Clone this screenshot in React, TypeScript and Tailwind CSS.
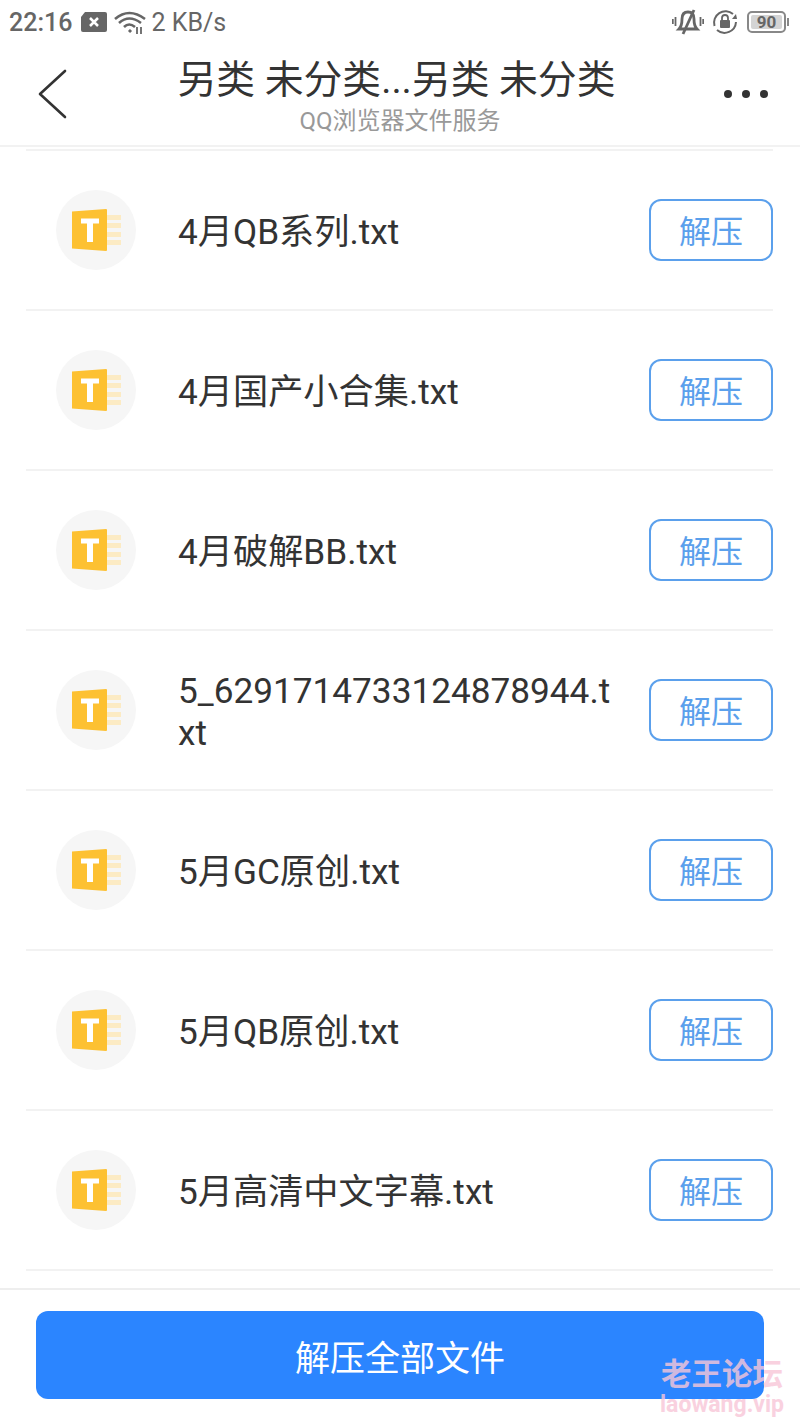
const font = { fontFamily: '"Roboto", "Noto Sans CJK SC", sans-serif' };

const files = [
  "4月QB系列.txt",
  "4月国产小合集.txt",
  "4月破解BB.txt",
  "5_6291714733124878944.txt",
  "5月GC原创.txt",
  "5月QB原创.txt",
  "5月高清中文字幕.txt",
];

function TxtIcon() {
  return (
    <div className="flex h-20 w-20 shrink-0 items-center justify-center rounded-full bg-[#f6f6f6]">
      <svg width="52" height="44" viewBox="0 0 52 44" className="ml-[1px]">
        <rect x="36" y="7" width="14" height="5" fill="#fcebc4" />
        <rect x="36" y="15" width="14" height="5" fill="#fcebc4" />
        <rect x="36" y="24" width="14" height="5" fill="#fcebc4" />
        <rect x="36" y="32" width="14" height="5" fill="#fcebc4" />
        <path d="M1 3.5 L35 1 Q36 1 36 2 V42 Q36 43 35 43 L1 40.5 Z" fill="#fdc132" />
        <path d="M10 10.5 H28 V15.5 H22 V34 H16 V15.5 H10 Z" fill="#ffffff" />
      </svg>
    </div>
  );
}

function Row({ name }: { name: string }) {
  return (
    <div className="flex h-40 items-center border-t-2 border-[#f2f2f2] pl-[30px]">
      <TxtIcon />
      <div className="ml-[42px] w-[440px] pt-[4px] text-[35.2px] leading-[42px] break-all text-[#333333]">{name}</div>
      <button className="ml-auto flex h-[62px] w-[124px] items-center justify-center rounded-[12px] border-2 border-[#5ba0ec] pt-[4px] text-[32px] text-[#5ba0ec]">
        解压
      </button>
    </div>
  );
}

function StatusBar() {
  return (
    <div className="flex h-[44px] items-center justify-between pl-[9px] pr-[14px] text-[#666666]">
      <div className="flex items-center">
        <span className="text-[25px] font-medium leading-none">22:16</span>
        <svg width="28" height="20" viewBox="0 0 28 20" className="ml-[8px]">
          <path d="M5 0 H25 Q27 0 27 2 V18 Q27 20 25 20 H3 Q1 20 1 18 V5 Z" fill="#666666" />
          <path d="M10 6 L18 14 M18 6 L10 14" stroke="#ffffff" strokeWidth="2.5" />
        </svg>
        <svg width="32" height="24" viewBox="0 0 32 24" className="ml-[6px]" fill="none" stroke="#666666" strokeWidth="2.6">
          <path d="M1 9 Q15 -3 31 9" />
          <path d="M5 13 Q15 4 27 13" />
          <path d="M10 17 Q15 12 21 17" />
          <path d="M15 22 L17 20" strokeWidth="3" />
          <path d="M23 17 V24 M27 17 V24" strokeWidth="1.8" />
        </svg>
        <span className="ml-[5px] text-[25px] leading-none">2 KB/s</span>
      </div>
      <div className="flex items-center">
        <svg width="32" height="26" viewBox="0 0 32 26" fill="none" stroke="#666666" strokeWidth="2.8">
          <path d="M7 20 Q10 17 10 10 Q10 3 16 3 Q22 3 22 10 Q22 17 25 20 Z" />
          <path d="M22 1 L11 25" />
          <path d="M3.5 8 V17 M0.8 10 V15 M28.5 8 V17 M31.2 10 V15" strokeWidth="1.8" />
        </svg>
        <svg width="26" height="26" viewBox="0 0 26 26" className="ml-[8px]" fill="none">
          <path d="M21 5 A11.5 11.5 0 0 0 2.5 17" stroke="#666666" strokeWidth="2" />
          <path d="M5 21 A11.5 11.5 0 0 0 24 13" stroke="#666666" strokeWidth="2" />
          <path d="M20 10 L25 10 L24 5 Z" fill="#666666" />
          <rect x="8" y="11" width="10" height="8" rx="1" fill="#666666" />
          <path d="M10 11 V9 A3 3 0 0 1 16 9 V11" stroke="#666666" strokeWidth="1.8" />
        </svg>
        <div className="relative ml-[9px] flex h-[22px] w-[39px] items-center justify-center rounded-[5px] border-2 border-[#888888] p-[2px]">
          <div className="flex h-full w-full items-center justify-center rounded-[2px] bg-[#d4d4d4] text-[17px] font-bold leading-none">90</div>
          <div className="absolute -right-[5px] top-[5px] h-[8px] w-[2px] bg-[#888888]" />
        </div>
      </div>
    </div>
  );
}

export default function App() {
  return (
    <div className="relative flex h-[1422px] w-[800px] flex-col overflow-hidden bg-white" style={font}>
      <StatusBar />
      <div className="flex h-[103px] items-start border-b-2 border-[#f2f2f2] bg-white">
        <div className="w-[178px] shrink-0 pl-[38px] pt-[25px]">
          <svg width="30" height="50" viewBox="0 0 30 50" fill="none" stroke="#333333" strokeWidth="2.6" strokeLinecap="round" strokeLinejoin="round">
            <path d="M27 2 L2 25 L27 48" />
          </svg>
        </div>
        <div className="flex w-[444px] flex-col items-center">
          <div className="-ml-[7px] whitespace-nowrap pt-[11px] text-[38.8px] leading-[50px] text-[#333333]">另类 未分类...另类 未分类</div>
          <div className="mt-[2px] text-[24px] leading-[28px] text-[#999999]">QQ浏览器文件服务</div>
        </div>
        <div className="flex flex-1 justify-end gap-[10px] pr-[32px] pt-[46px]">
          <span className="h-[8px] w-[8px] rounded-full bg-[#333333]" />
          <span className="h-[8px] w-[8px] rounded-full bg-[#333333]" />
          <span className="h-[8px] w-[8px] rounded-full bg-[#333333]" />
        </div>
      </div>
      <div className="ml-[26px] mr-[27px] flex-1 pt-[2px]">
        {files.map((f) => (
          <Row key={f} name={f} />
        ))}
        <div className="border-t-2 border-[#f2f2f2]" />
      </div>
      <div className="flex h-[134px] items-start border-t-2 border-[#eeeeee] px-[36px] pt-[21px]">
        <button className="flex h-[88px] w-full items-center justify-center rounded-[12px] bg-[#2b85ff] pt-[10px] text-[35px] text-white">
          解压全部文件
        </button>
      </div>
      <div className="absolute left-[660px] top-[1357px] flex w-[124px] flex-col items-center text-[#f8c6d8] opacity-80">
        <span className="whitespace-nowrap text-[30.5px] font-bold leading-[36px]">老王论坛</span>
        <span className="text-[23px] font-bold leading-[24px]">laowang.vip</span>
      </div>
    </div>
  );
}
